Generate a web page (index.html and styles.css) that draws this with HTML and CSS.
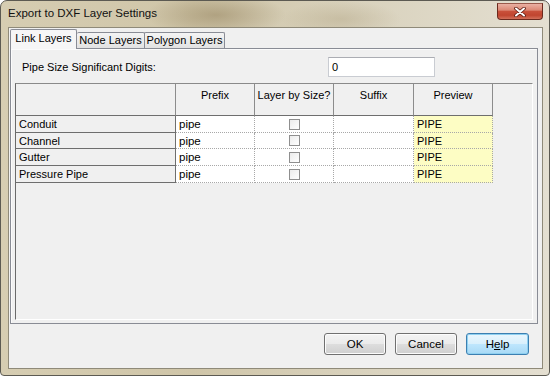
FILE: index.html
```html
<!DOCTYPE html>
<html>
	<head>
		<title>Export to DXF Layer Settings</title>
		<meta name="viewport" content="width=device-width, initial-scale=1">
		<link rel="stylesheet" href="styles.css">
	</head>
	<body>
	<div class="window">
		<div class="titlebar">
			<span class="title">Export to DXF Layer Settings</span>
			<div class="close">
				<svg width="12" height="10" viewBox="0 0 12 10">
					<path d="M2 1.5 L10 8.5 M10 1.5 L2 8.5" stroke="#5a1a10" stroke-width="3.6" stroke-linecap="round"/>
					<path d="M2 1.5 L10 8.5 M10 1.5 L2 8.5" stroke="#ffffff" stroke-width="2" stroke-linecap="round"/>
				</svg>
			</div>
		</div>
		<div class="client">
			<div class="tabs">
				<div class="tab active">Link Layers</div>
				<div class="tab node">Node Layers</div>
				<div class="tab poly">Polygon Layers</div>
			</div>
			<div class="pane">
				<div class="digits">
					<span class="label">Pipe Size Significant Digits:</span>
					<div class="field">0</div>
				</div>
				<div class="grid">
					<div class="table">
						<div class="hd corner"></div>
						<div class="hd">Prefix</div>
						<div class="hd">Layer by Size?</div>
						<div class="hd">Suffix</div>
						<div class="hd">Preview</div>

						<div class="rh">Conduit</div>
						<div class="cell">pipe</div>
						<div class="cell chk"><span class="box"></span></div>
						<div class="cell"></div>
						<div class="cell prev">PIPE</div>

						<div class="rh">Channel</div>
						<div class="cell">pipe</div>
						<div class="cell chk"><span class="box"></span></div>
						<div class="cell"></div>
						<div class="cell prev">PIPE</div>

						<div class="rh">Gutter</div>
						<div class="cell">pipe</div>
						<div class="cell chk"><span class="box"></span></div>
						<div class="cell"></div>
						<div class="cell prev">PIPE</div>

						<div class="rh">Pressure Pipe</div>
						<div class="cell">pipe</div>
						<div class="cell chk"><span class="box"></span></div>
						<div class="cell"></div>
						<div class="cell prev">PIPE</div>
					</div>
				</div>
			</div>
			<div class="buttons">
				<div class="button">OK</div>
				<div class="button">Cancel</div>
				<div class="button help">H<u>e</u>lp</div>
			</div>
		</div>
	</div>
	</body>
</html>
```

FILE: styles.css
```css
body{
	margin:0;
	width:550px;
	height:376px;
	overflow:hidden;
	background:#ffffff;
	font-family:"Liberation Sans", Arial, sans-serif;
	font-size:11px;
	color:#000;
}
.window{
	box-sizing:border-box;
	width:550px;
	height:376px;
	border:1px solid #5c5a52;
	border-radius:7px 7px 4px 4px;
	padding:0 6px 6px 7px;
	display:flex;
	flex-direction:column;
	background:
		radial-gradient(ellipse 70px 22px at 215px 14px, rgba(150,132,95,0.55), rgba(150,132,95,0)),
		radial-gradient(ellipse 60px 18px at 340px 18px, rgba(170,155,120,0.35), rgba(170,155,120,0)),
		linear-gradient(to right, #d6cdb2 0%, #cfc5a8 35%, #d9d2bd 65%, #e4dfd1 100%);
}
.titlebar{
	height:26px;
	display:flex;
	align-items:flex-start;
}
.title{
	margin-top:6px;
	font-size:11.5px;
	color:#111;
}
.close{
	margin-left:auto;
	margin-top:2px;
	width:44px;
	height:15px;
	border:1px solid #6b2a1e;
	border-top-color:#9a5a4c;
	border-radius:0 0 4px 4px;
	background:linear-gradient(#eab1a3 0%, #dc8a76 40%, #c8503a 50%, #c0452f 75%, #d2705a 100%);
	display:flex;
	align-items:center;
	justify-content:center;
}
.client{
	flex:1;
	border:1px solid #8f8a79;
	background:#f0f0f0;
	display:flex;
	flex-direction:column;
}
.tabs{
	display:flex;
	align-items:flex-end;
	height:19px;
	margin-top:1px;
	padding-left:1px;
	position:relative;
	z-index:1;
}
.tab{
	box-sizing:border-box;
	height:16px;
	border:1px solid #898c95;
	border-bottom:none;
	background:linear-gradient(#f4f4f4, #e2e2e2);
	text-align:center;
	line-height:15px;
	border-radius:2px 2px 0 0;
}
.tab.active{
	width:67px;
	height:20px;
	margin-bottom:-1px;
	background:#f6f6f6;
	line-height:17px;
}
.tab.node{
	width:68px;
	border-left:none;
}
.tab.poly{
	width:81px;
	border-left:1px solid #898c95;
	margin-left:-1px;
}
.pane{
	height:276px;
	box-sizing:border-box;
	margin:0 4px 0 1px;
	border:1px solid #898c95;
	background:#f0f0f0;
	box-shadow:inset 1px 1px #fbfbfb;
	padding:8px 4px 0 4px;
}
.digits{
	display:flex;
	align-items:center;
	height:20px;
}
.label{
	width:313px;
	padding-left:7px;
	box-sizing:border-box;
	font-size:11px;
}
.field{
	box-sizing:border-box;
	width:107px;
	height:20px;
	border:1px solid #c9ccd2;
	border-top-color:#abadb3;
	background:#fff;
	padding:3px 0 0 3px;
}
.grid{
	margin-top:6px;
	height:237px;
	box-sizing:border-box;
	border:1px solid;
	border-color:#8a8a8a #ffffff #ffffff #6a6a6a;
	background:#f0f0f0;
}
.table{
	display:grid;
	grid-template-columns:160px 79px 79px 80px 79px;
	grid-template-rows:32px 17px 16px 17px 17px;
	width:477px;
}
.hd{
	box-sizing:border-box;
	border-right:1px solid #8c8c8c;
	border-bottom:1px solid #6e6e6e;
	text-align:center;
	padding-top:5px;
	background:#f0f0f0;
}
.rh{
	box-sizing:border-box;
	border-right:1px solid #6e6e6e;
	border-bottom:1px solid #6e6e6e;
	padding:2px 0 0 3px;
	background:#f0f0f0;
}
.cell{
	box-sizing:border-box;
	background:#fff;
	border-right:1px dotted #a8a8a8;
	border-bottom:1px dotted #a8a8a8;
	padding:2px 0 0 3px;
	font-size:11.5px;
}
.cell.prev{
	background:#fdfdc4;
	font-size:11px;
}
.cell.chk{
	padding:0;
	display:flex;
	align-items:center;
	justify-content:center;
}
.box{
	width:11px;
	height:11px;
	box-sizing:border-box;
	border:1px solid #8f8f8f;
	background:linear-gradient(135deg, #ececec, #ffffff);
}
.buttons{
	display:flex;
	justify-content:flex-end;
	gap:9px;
	margin-top:9px;
	padding-right:13px;
}
.button{
	box-sizing:border-box;
	width:62px;
	height:22px;
	border:1px solid #707070;
	border-radius:3px;
	background:linear-gradient(#f3f3f3 0%, #ebebeb 48%, #dddddd 52%, #cfcfcf 100%);
	box-shadow:inset 0 0 0 1px #fcfcfc;
	text-align:center;
	line-height:20px;
	font-size:11.5px;
}
.button.help{
	width:63px;
	border-color:#3c7fb1;
	background:linear-gradient(#eaf6fd 0%, #d9f0fc 48%, #bee6fd 52%, #a7d9f5 100%);
	box-shadow:inset 0 0 0 1px #8fd0f0;
}
```
